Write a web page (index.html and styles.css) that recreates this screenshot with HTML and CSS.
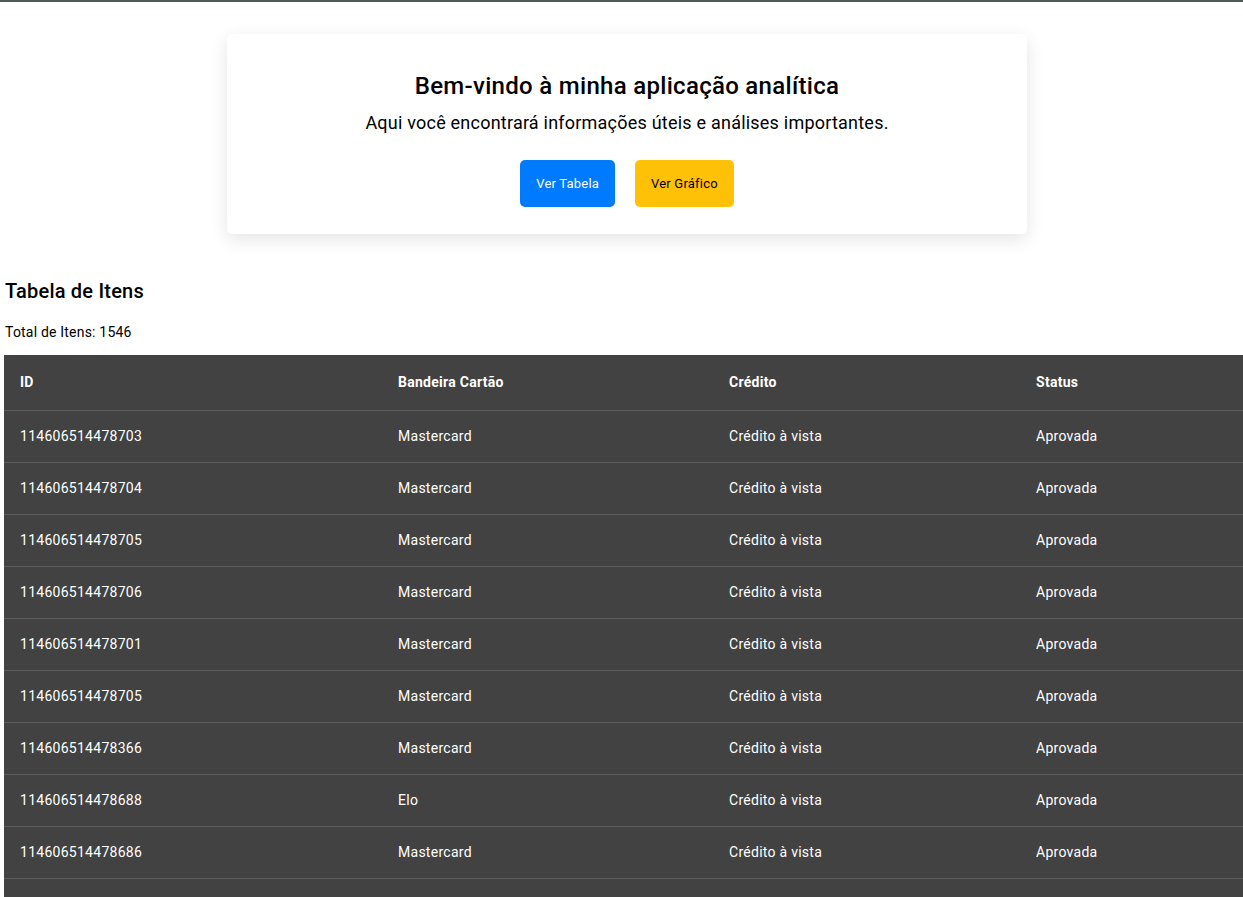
FILE: index.html
```html
<!DOCTYPE html>
<html lang="pt-BR">
<head>
<meta charset="utf-8">
<title>Aplicação analítica</title>
<link rel="stylesheet" href="styles.css">
</head>
<body>
<div class="topbar"></div>
<main class="page">
  <section class="hero">
    <h1 class="hero-title">Bem-vindo à minha aplicação analítica</h1>
    <p class="hero-sub">Aqui você encontrará informações úteis e análises importantes.</p>
    <div class="hero-actions">
      <button class="btn btn-blue">Ver Tabela</button>
      <button class="btn btn-yellow">Ver Gráfico</button>
    </div>
  </section>

  <section class="items">
    <h2 class="items-title">Tabela de Itens</h2>
    <p class="items-total">Total de Itens: 1546</p>
    <div class="table">
      <div class="row head"><div>ID</div><div>Bandeira Cartão</div><div>Crédito</div><div>Status</div></div>
      <div class="row"><div>114606514478703</div><div>Mastercard</div><div>Crédito à vista</div><div>Aprovada</div></div>
      <div class="row"><div>114606514478704</div><div>Mastercard</div><div>Crédito à vista</div><div>Aprovada</div></div>
      <div class="row"><div>114606514478705</div><div>Mastercard</div><div>Crédito à vista</div><div>Aprovada</div></div>
      <div class="row"><div>114606514478706</div><div>Mastercard</div><div>Crédito à vista</div><div>Aprovada</div></div>
      <div class="row"><div>114606514478701</div><div>Mastercard</div><div>Crédito à vista</div><div>Aprovada</div></div>
      <div class="row"><div>114606514478705</div><div>Mastercard</div><div>Crédito à vista</div><div>Aprovada</div></div>
      <div class="row"><div>114606514478366</div><div>Mastercard</div><div>Crédito à vista</div><div>Aprovada</div></div>
      <div class="row"><div>114606514478688</div><div>Elo</div><div>Crédito à vista</div><div>Aprovada</div></div>
      <div class="row"><div>114606514478686</div><div>Mastercard</div><div>Crédito à vista</div><div>Aprovada</div></div>
    </div>
  </section>
</main>
</body>
</html>
```
FILE: styles.css
```css
html, body {
  margin: 0;
  padding: 0;
  background: #ffffff;
  font-family: Roboto, "Liberation Sans", Arial, sans-serif;
  color: #000;
  overflow: hidden;
}
.topbar {
  height: 2px;
  background: #4d5b59;
}
.page {
  padding: 0 0 0 4px;
}
.hero {
  width: 800px;
  height: 200px;
  box-sizing: border-box;
  margin: 32px 0 0 223px;
  background: #fff;
  border-radius: 5px;
  box-shadow: 0 5px 18px rgba(0, 0, 0, 0.11);
  text-align: center;
  padding-top: 38px;
}
.hero-title {
  margin: 0;
  font-size: 24px;
  font-weight: 500;
  line-height: 28px;
  letter-spacing: 0.3px;
}
.hero-sub {
  margin: 11px 0 0;
  font-size: 18px;
  line-height: 24px;
  letter-spacing: 0.22px;
}
.hero-actions {
  display: flex;
  justify-content: center;
  gap: 20px;
  margin-top: 25px;
}
.btn {
  font-family: inherit;
  font-size: 13px;
  letter-spacing: 0.2px;
  border: 0;
  border-radius: 5px;
  height: 47px;
  padding: 0 16px;
  cursor: pointer;
}
.btn-blue { background: #007bff; color: #fff; }
.btn-yellow { background: #ffc107; color: #000; }

.items {
  margin-top: 45px;
}
.items-title {
  margin: 0 0 0 1px;
  font-size: 20px;
  font-weight: 500;
  line-height: 24px;
  letter-spacing: 0.2px;
}
.items-total {
  margin: 21px 0 0 1px;
  font-size: 14px;
  line-height: 16px;
  letter-spacing: 0.2px;
}
.table {
  margin-top: 15px;
  background: #424242;
  color: #fff;
  font-size: 14px;
  letter-spacing: 0.27px;
  padding-bottom: 40px;
}
.row {
  display: grid;
  grid-template-columns: 378px 331px 307px 1fr;
  height: 52px;
  padding-bottom: 2px;
  align-items: center;
  border-bottom: 1px solid #5c5c5c;
  box-sizing: border-box;
}
.row > div { padding-left: 16px; }
.row.head {
  height: 56px;
  font-weight: 700;
}
```
